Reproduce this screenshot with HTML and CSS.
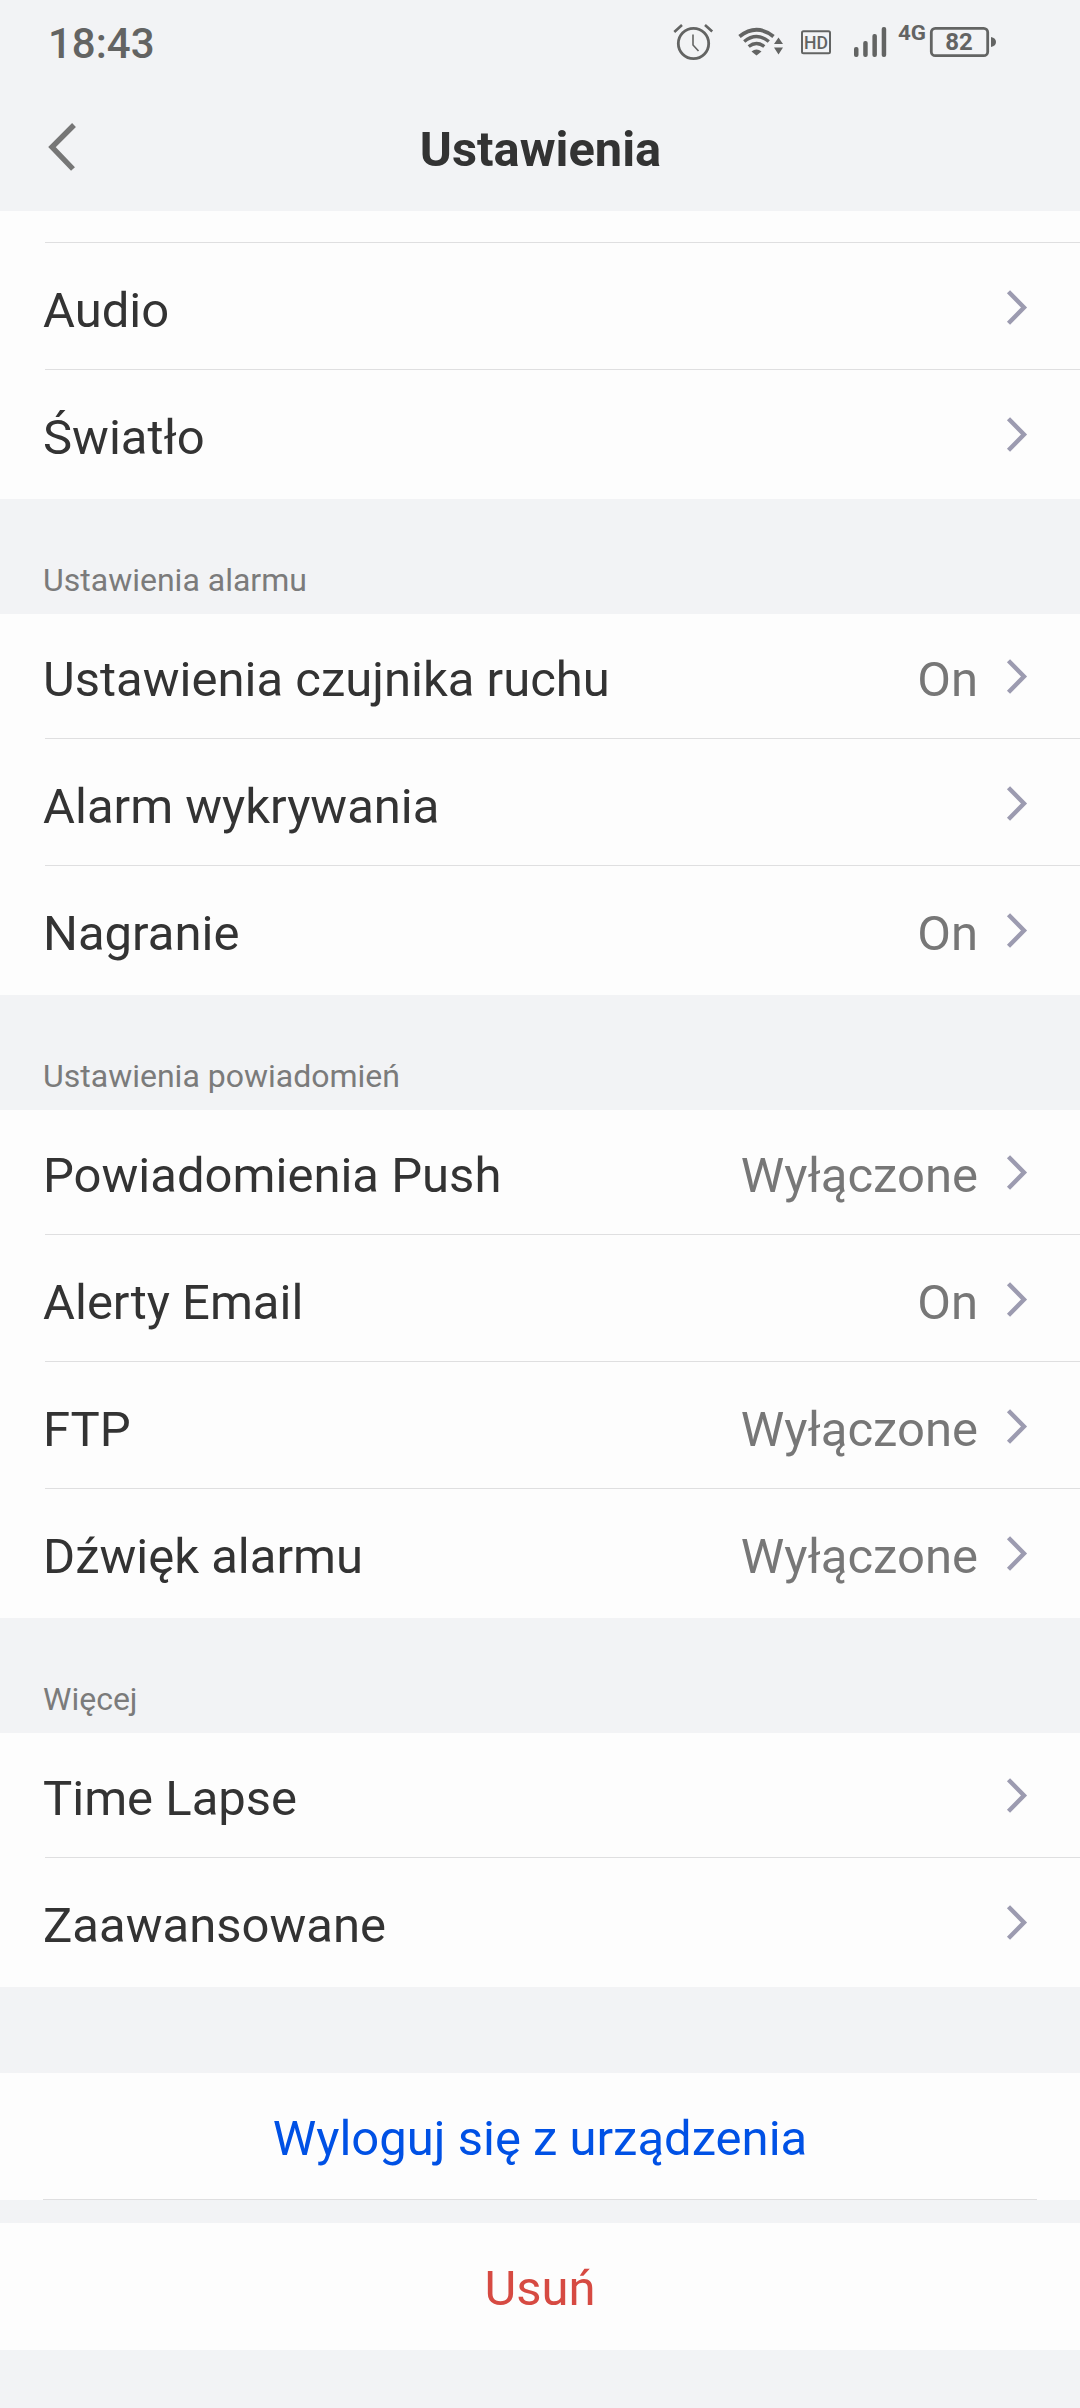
FILE: index.html
```html
<!DOCTYPE html>
<html lang="pl">
<head>
  <meta charset="UTF-8" />
  <title>Ustawienia</title>
  <link rel="stylesheet" href="styles.css">
</head>
<body>

<svg class="defs" width="0" height="0">
  <symbol id="chevron" viewBox="0 0 22 36">
    <path d="M2.5 1.8 L18 17.5 L2.5 33.2" fill="none" stroke="#9c9bb0" stroke-width="4.4" />
  </symbol>
</svg>

<div class="statusbar">
  <span class="clock">18:43</span>
  <svg class="status-icons" width="330" height="50" viewBox="670 18 330 50">
    <g fill="none" stroke="#636463">
      <circle cx="693.5" cy="43.5" r="15.2" stroke-width="2.8" />
      <path d="M693 34.5 V45 L698.5 51" stroke-width="1.6" />
      <path d="M674.3 32 L682 25 M705 25 L712.2 31.5" stroke-width="2.6" />
      <path d="M739.5 36.5 Q756.5 23 773.5 36.5" stroke-width="3.8" />
      <path d="M744.2 41.5 Q756.5 31.5 768.8 41.5" stroke-width="3.4" />
      <path d="M748.7 46.5 Q756.5 40.5 764.3 46.5" stroke-width="3.4" />
      <rect x="802" y="31.2" width="28" height="22" rx="1.5" stroke-width="2" />
      <rect x="931.3" y="28.3" width="56.4" height="27.4" rx="4" stroke-width="2.8" />
    </g>
    <g fill="#636463">
      <path d="M751.5 51.5 Q756.5 47.5 761.5 51.5 L756.5 55.5 Z" />
      <path d="M778.5 37.5 L783 44 H774 Z M774 47.5 H783 L778.5 54.5 Z" />
      <rect x="854" y="47" width="4.5" height="10" rx="2" />
      <rect x="863.2" y="41" width="4.5" height="16" rx="2" />
      <rect x="872.4" y="34" width="4.5" height="23" rx="2" />
      <rect x="881.7" y="27" width="4.5" height="30" rx="2" />
      <path d="M991 37 Q996 38 996 42 Q996 46 991 47 Z" />
    </g>
    <text class="hd" x="816" y="49" textLength="24" lengthAdjust="spacingAndGlyphs">HD</text>
    <text class="net" x="912" y="40" textLength="28" lengthAdjust="spacingAndGlyphs">4G</text>
    <text class="level" x="959" y="50">82</text>
  </svg>
</div>

<header class="navbar">
  <svg class="back" width="30" height="50" viewBox="0 0 30 50">
    <path d="M26 3 L4 25 L25 47" fill="none" stroke="#767676" stroke-width="5.4" />
  </svg>
  <h1>Ustawienia</h1>
</header>

<ul class="group group-cut">
  <li><span>Audio</span><svg class="chevron"><use href="#chevron" /></svg></li>
  <li><span>Światło</span><svg class="chevron"><use href="#chevron" /></svg></li>
</ul>

<h2>Ustawienia alarmu</h2>
<ul class="group">
  <li><span>Ustawienia czujnika ruchu</span><em>On</em><svg class="chevron"><use href="#chevron" /></svg></li>
  <li><span>Alarm wykrywania</span><svg class="chevron"><use href="#chevron" /></svg></li>
  <li><span>Nagranie</span><em>On</em><svg class="chevron"><use href="#chevron" /></svg></li>
</ul>

<h2>Ustawienia powiadomień</h2>
<ul class="group">
  <li><span>Powiadomienia Push</span><em>Wyłączone</em><svg class="chevron"><use href="#chevron" /></svg></li>
  <li><span>Alerty Email</span><em>On</em><svg class="chevron"><use href="#chevron" /></svg></li>
  <li><span>FTP</span><em>Wyłączone</em><svg class="chevron"><use href="#chevron" /></svg></li>
  <li><span>Dźwięk alarmu</span><em>Wyłączone</em><svg class="chevron"><use href="#chevron" /></svg></li>
</ul>

<h2>Więcej</h2>
<ul class="group">
  <li><span>Time Lapse</span><svg class="chevron"><use href="#chevron" /></svg></li>
  <li><span>Zaawansowane</span><svg class="chevron"><use href="#chevron" /></svg></li>
</ul>

<div class="action logout"><span>Wyloguj się z urządzenia</span></div>
<div class="action remove"><span>Usuń</span></div>

</body>
</html>
```
FILE: styles.css
```css
* {
  box-sizing: border-box;
}
body {
  margin: 0;
  font-family: Roboto, sans-serif;
  background: #f2f3f5;
  color: #333;
}
.defs {
  display: block;
}
.statusbar {
  display: flex;
  justify-content: space-between;
  height: 86px;
  padding: 18px 80px 0 48px;
  color: #636463;
}
.clock {
  font-size: 42px;
  font-weight: 500;
  line-height: 52px;
}
.status-icons text {
  fill: #636463;
  text-anchor: middle;
}
.hd {
  font-size: 18.5px;
  font-weight: 500;
}
.net {
  font-size: 20px;
  font-weight: 700;
}
.level {
  font-size: 24px;
  font-weight: 700;
}
.navbar {
  display: flex;
  height: 125px;
  padding: 35px 48px 0;
}
.back {
  margin-top: 1px;
}
.navbar h1 {
  flex: 1;
  margin: 0 29px 0 0;
  font-size: 48.8px;
  font-weight: 700;
  line-height: 58px;
  text-align: center;
}
.group {
  margin: 0;
  padding: 0;
  list-style: none;
  background: #fdfdfd;
}
.group-cut {
  padding-top: 31px;
}
.group li {
  display: flex;
  height: 127px;
  margin-left: 45px;
  padding: 39px 52px 0 0;
  border-bottom: 1px solid #dfdfe0;
  font-size: 49px;
  line-height: 58px;
}
.group li:first-child {
  height: 125px;
  padding-top: 37px;
}
.group-cut li:first-child {
  height: 128px;
  padding-top: 39px;
  border-top: 1px solid #dfdfe0;
}
.group li:last-child {
  height: 129px;
  border-bottom: 0;
}
.group span {
  flex: 1;
  margin-left: -2px;
}
.group em {
  font-style: normal;
  color: #777;
}
.chevron {
  width: 22px;
  height: 36px;
  margin: 8px 0 0 28px;
}
h2 {
  height: 115px;
  margin: 0;
  padding: 62px 43px 0;
  font-size: 32px;
  font-weight: 400;
  line-height: 39px;
  color: #7b7b7b;
}
.action {
  height: 127px;
  padding: 0 43px;
  background: #fdfdfd;
  font-size: 49px;
  line-height: 58px;
  text-align: center;
}
.action span {
  display: block;
  height: 127px;
  padding-top: 37px;
}
.logout {
  margin-top: 86px;
  color: #0051e5;
}
.logout span {
  border-bottom: 1px solid #dfdfe0;
}
.remove {
  margin-top: 23px;
  color: #d64a42;
}
```
